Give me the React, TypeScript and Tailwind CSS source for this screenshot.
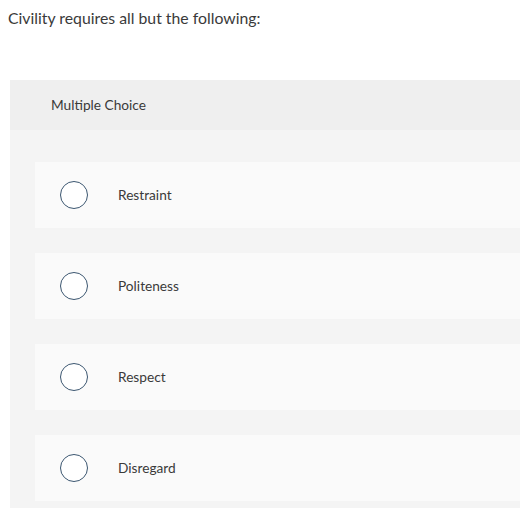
export default function App() {
  const choices = ["Restraint", "Politeness", "Respect", "Disregard"];

  return (
    <div
      className="h-[508px] w-[520px] overflow-hidden bg-white text-[#3a3a3a]"
      style={{ fontFamily: "Lato, 'Open Sans', sans-serif" }}
    >
      <p className="px-[8px] pt-[7px] text-[15.8px] leading-[22px]">
        Civility requires all but the following:
      </p>

      <div className="ml-[10px] mt-[51px] bg-[#f4f4f4]">
        <div className="flex h-[50px] items-center bg-[#efefef] pl-[41px] text-[13.7px] text-[#3a3a3a]">
          Multiple Choice
        </div>

        <div className="flex flex-col gap-[25px] pl-[25px] pt-[32px] pb-[10px]">
          {choices.map((c) => (
            <div key={c} className="flex h-[66px] items-center bg-[#fafafa]">
              <span className="ml-[25px] h-[28px] w-[28px] rounded-full border-[1.5px] border-[#3b5670] bg-white" />
              <span className="ml-[30px] text-[13.7px] text-[#3a3a3a]">{c}</span>
            </div>
          ))}
        </div>
      </div>
    </div>
  );
}
